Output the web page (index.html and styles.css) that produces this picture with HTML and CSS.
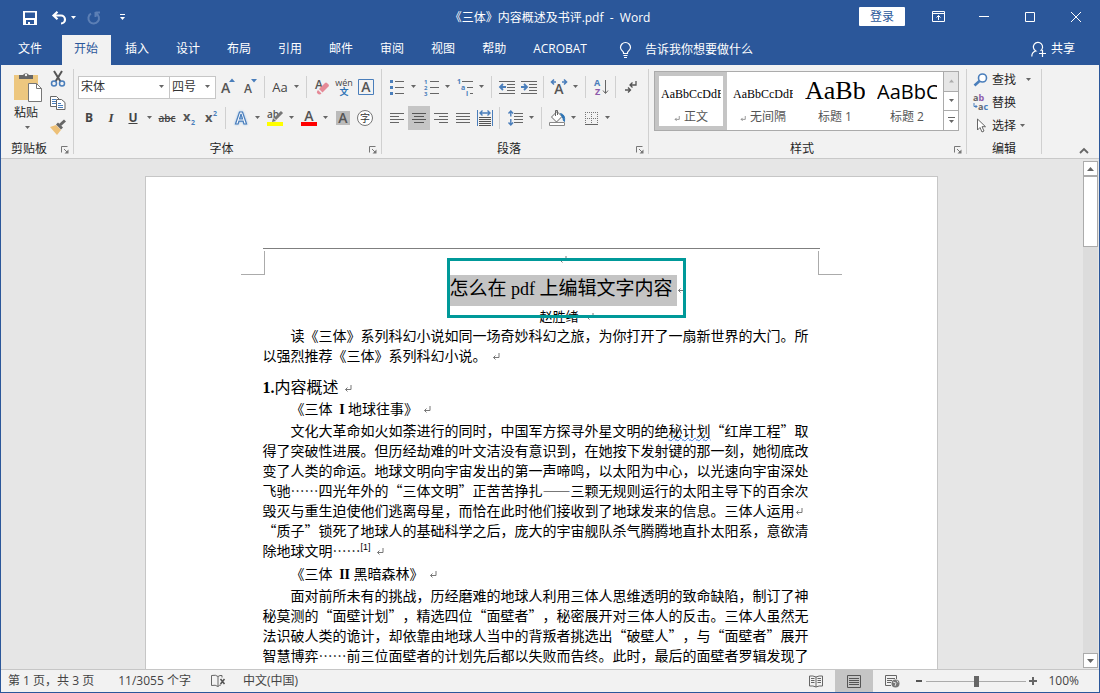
FILE: index.html
```html
<!DOCTYPE html>
<html lang="zh-CN">
<head>
<meta charset="utf-8">
<title>《三体》内容概述及书评.pdf - Word</title>
<link rel="stylesheet" href="styles.css">
</head>
<body>
<svg class="defs" aria-hidden="true">
  <symbol id="caret" viewBox="0 0 7 4"><path d="M1 0h5L3.500 3z" fill="#666"/></symbol>
  <symbol id="ret" viewBox="0 0 8 8"><path d="M7 0v4.500H1.500M3.500 2.500l-2 2 2 2" fill="none" stroke="#777"/></symbol>
  <symbol id="launch" viewBox="0 0 8 8"><path d="M.5 6.500v-6h6M3 3l3 3" fill="none" stroke="#777"/><path d="M7.500 3.500v4h-4z" fill="#777"/></symbol>
</svg>
<div class="window">
  <header class="titlebar">
    <div class="quick">
      <button class="q-save" aria-label="保存"><svg width="14" height="14" viewBox="0 0 14 14"><path d="M0 0h14v14H0zM2 1.500v5.500h10V1.500zM3 9v4h2v-2h2v2h4V9z" fill="#fff" fill-rule="evenodd"/></svg></button>
      <button class="q-undo" aria-label="撤消"><svg width="15" height="14" viewBox="0 0 15 14"><path d="M1.500 4.500H9a4 4 0 0 1 0 8M5.500.7 1.500 4.500l4 3.800" fill="none" stroke="#fff" stroke-width="2.200"/></svg></button>
      <button class="q-caret" aria-label="撤消列表"><svg width="7" height="4" viewBox="0 0 7 4"><path d="M1 0h5L3.500 3z" fill="#fff"/></svg></button>
      <button class="q-redo" aria-label="恢复"><svg width="14" height="14" viewBox="0 0 14 14"><path d="M8.500 1.500H13M8.500 1v5M9 2.500a5.300 5.300 0 1 1-5 .2" fill="none" stroke="#5c7fb5" stroke-width="2"/></svg></button>
      <button class="q-more" aria-label="自定义快速访问工具栏"><svg width="7" height="7" viewBox="0 0 7 7"><path d="M1 .5h5" stroke="#fff"/><path d="M1 3h5L3.500 6z" fill="#fff"/></svg></button>
    </div>
    <h1 class="title">《三体》内容概述及书评.pdf  -  Word</h1>
    <div class="controls">
      <button class="login">登录</button>
      <button class="win" aria-label="功能区显示选项"><svg width="13" height="11" viewBox="0 0 13 11"><path d="M.5.5h12v10H.5zM.5 2.500h12M6.500 9V4.500M4.500 6.500l2-2 2 2" fill="none" stroke="#fff"/></svg></button>
      <button class="win" aria-label="最小化"><svg width="10" height="10" viewBox="0 0 10 10"><path d="M0 4.500h10" stroke="#fff"/></svg></button>
      <button class="win" aria-label="最大化"><svg width="10" height="10" viewBox="0 0 10 10"><path d="M.5.5h9v9h-9z" fill="none" stroke="#fff"/></svg></button>
      <button class="win" aria-label="关闭"><svg width="10" height="10" viewBox="0 0 10 10"><path d="m0 0 10 10m0-10-10 10" stroke="#fff"/></svg></button>
    </div>
  </header>

  <nav class="tabs">
    <button class="tab file">文件</button>
    <button class="tab active">开始</button>
    <button class="tab">插入</button>
    <button class="tab">设计</button>
    <button class="tab">布局</button>
    <button class="tab">引用</button>
    <button class="tab">邮件</button>
    <button class="tab">审阅</button>
    <button class="tab">视图</button>
    <button class="tab">帮助</button>
    <button class="tab">ACROBAT</button>
    <button class="tell"><svg width="13" height="17" viewBox="0 0 13 17"><path d="M4.500 11.500v-1C4 9 1.500 8 1.500 5.500a5 5 0 0 1 10 0C11.500 8 9 9 8.500 10.500v1zM4.500 13.500h4M5 15.500h3" fill="none" stroke="#fff" stroke-width="1.200"/></svg>告诉我你想要做什么</button>
    <button class="share"><svg width="15" height="17" viewBox="0 0 15 17"><path d="M.8 15.500c0-3.500 2-5 4-5.500A4.600 4.600 0 1 1 9.500 9.800M11.500 9v7M8 12.500h7" fill="none" stroke="#fff" stroke-width="1.200"/></svg>共享</button>
  </nav>

  <section class="ribbon">
    <div class="group clip">
      <div class="clip-body">
        <button class="paste">
          <svg width="28" height="30" viewBox="0 0 28 30"><path d="M0 3h24v25H0z" fill="#edc77f"/><path d="M5 7V3h4a3.500 3.500 0 0 1 6 0h4v4z" fill="#666"/><circle cx="12" cy="3" r="1.200" fill="#f2f2f2"/><path d="M14.500 11.500h8l5 5v13h-13z" fill="#fff" stroke="#777"/><path d="M22.500 11.500v5h5" fill="none" stroke="#777"/></svg>
          <span>粘贴</span>
          <svg class="caret"><use href="#caret"/></svg>
        </button>
        <div class="clip-tools">
          <button class="ib" aria-label="剪切"><svg width="16" height="16" viewBox="0 0 16 16"><path d="m4 0 6.500 10.500M12 0 5.500 10.500" stroke="#555" stroke-width="2"/><g fill="none" stroke="#4a7ebb" stroke-width="1.500"><circle cx="4" cy="12.500" r="2.500"/><circle cx="12" cy="12.500" r="2.500"/></g></svg></button>
          <button class="ib" aria-label="复制"><svg width="16" height="16" viewBox="0 0 16 16"><g fill="#fff" stroke="#666"><path d="M.5 1.500h6l3 3v7h-9z"/><path d="M6.500 4.500h5l3.500 3v7H6.500z"/></g><path d="M2 4.500h4M2 6.500h4M2 8.500h4M8 8.500h3M8 10.500h5M8 12.500h5" stroke="#4a7ebb"/></svg></button>
          <button class="ib" aria-label="格式刷"><svg width="16" height="16" viewBox="0 0 16 16"><path d="m0 8 6-2 5 5-4 5z" fill="#edc077"/><path d="m6 5.500 2-2 5 5-2 2z" fill="#666"/><path d="m10 6 5-4.500" stroke="#666" stroke-width="3"/></svg></button>
        </div>
      </div>
      <div class="label"><span>剪贴板</span><button aria-label="剪贴板选项"><svg width="8" height="8"><use href="#launch"/></svg></button></div>
    </div>

    <div class="group font">
      <div class="row">
        <div class="combo name"><select aria-label="字体"><option>宋体</option></select><svg class="caret"><use href="#caret"/></svg></div>
        <div class="combo size"><select aria-label="字号"><option>四号</option></select><svg class="caret"><use href="#caret"/></svg></div>
        <button class="ib" aria-label="增大字号"><svg width="16" height="18" viewBox="0 0 16 18"><text x="1" y="15" font-size="14" class="ig">A</text><path d="M9 4h6l-3-3.500z" fill="#4a7ebb"/></svg></button>
        <button class="ib" aria-label="减小字号"><svg width="16" height="18" viewBox="0 0 16 18"><text x="2" y="15" font-size="12" class="ig">A</text><path d="M9 1h6l-3 3.500z" fill="#4a7ebb"/></svg></button>
        <i class="sep"></i>
        <button class="ib ig aa">Aa</button><button class="cb" aria-label="更改大小写选项"><svg class="caret"><use href="#caret"/></svg></button>
        <i class="sep"></i>
        <button class="ib" aria-label="清除格式"><svg width="16" height="16" viewBox="0 0 16 16"><text x="1" y="10" font-size="12" class="ig">A</text><path d="m5 10 6-6q1-1 2 0l1.500 1.500q1 1 0 2l-6 6z" fill="#e58a97"/><path d="m4 11 3.500 3.500q-2 2-4 0-1.500-1.500.5-3.500z" fill="#e58a97"/></svg></button>
        <button class="ib" aria-label="拼音指南"><svg width="18" height="18" viewBox="0 0 18 18"><text x="9" y="8" font-size="9" text-anchor="middle" fill="#444">wén</text><text x="9" y="17" font-size="9" text-anchor="middle" fill="#2e75b6" font-weight="700">文</text></svg></button>
        <button class="ib" aria-label="字符边框"><svg width="16" height="16" viewBox="0 0 16 16"><path d="M.5.5h15v15H.5z" fill="none" stroke="#4a7ebb"/><text x="8" y="13" font-size="14" text-anchor="middle" class="ig">A</text></svg></button>
      </div>
      <div class="row">
        <button class="ib ig bold">B</button><button class="ib ig ital">I</button><button class="ib ig under">U</button><button class="cb" aria-label="下划线选项"><svg class="caret"><use href="#caret"/></svg></button>
        <button class="ib ig strike">abc</button>
        <button class="ib" aria-label="下标"><svg width="16" height="16" viewBox="0 0 16 16"><text x="2" y="11" font-size="13" class="ig heavy">x</text><text x="10" y="15" font-size="7" font-weight="700" fill="#4a7ebb">2</text></svg></button>
        <button class="ib" aria-label="上标"><svg width="16" height="16" viewBox="0 0 16 16"><text x="2" y="12" font-size="13" class="ig heavy">x</text><text x="10" y="6" font-size="7" font-weight="700" fill="#4a7ebb">2</text></svg></button>
        <i class="sep"></i>
        <button class="ib" aria-label="文本效果"><svg width="18" height="18" viewBox="0 0 18 18"><g font-size="16" font-weight="700" text-anchor="middle"><text x="9" y="15" fill="#fff" stroke="#4a7ebb" stroke-width="1.200" class="glow">A</text></g></svg></button><button class="cb" aria-label="文本效果选项"><svg class="caret"><use href="#caret"/></svg></button>
        <button class="ib" aria-label="突出显示"><svg width="16" height="18" viewBox="0 0 16 18"><text x="0" y="9" font-size="10" class="ig">ab</text><path d="m15 3-7 7" stroke="#777" stroke-width="3"/><path d="m6 9 3 3-4 1z" fill="#777"/><path d="M0 13h16v4H0z" fill="#ff0"/></svg></button><button class="cb" aria-label="突出显示颜色"><svg class="caret"><use href="#caret"/></svg></button>
        <button class="ib" aria-label="字体颜色"><svg width="16" height="18" viewBox="0 0 16 18"><text x="8" y="12" font-size="14" text-anchor="middle" class="ig">A</text><path d="M0 13h16v4H0z" fill="red"/></svg></button><button class="cb" aria-label="字体颜色选项"><svg class="caret"><use href="#caret"/></svg></button>
        <button class="ib" aria-label="字符底纹"><svg width="14" height="14" viewBox="0 0 14 14"><path d="M0 0h14v14H0z" fill="#bbb"/><text x="7" y="12" font-size="14" text-anchor="middle" class="ig">A</text></svg></button>
        <button class="ib" aria-label="带圈字符"><svg width="16" height="16" viewBox="0 0 16 16"><circle cx="8" cy="8" r="7.500" fill="#fff" stroke="#777"/><text x="8" y="12" font-size="10" text-anchor="middle" fill="#333">字</text></svg></button>
      </div>
      <div class="label"><span>字体</span><button aria-label="字体选项"><svg width="8" height="8"><use href="#launch"/></svg></button></div>
    </div>

    <div class="group para">
      <div class="row">
        <button class="ib" aria-label="项目符号"><svg width="14" height="16" viewBox="0 0 14 16"><path d="M0 1h3v3H0zM0 7h3v3H0zM0 13h3v3H0z" fill="#4a7ebb"/><path d="M5 2.500h9M5 8.500h9M5 14.500h9" stroke="#666"/></svg></button><button class="cb" aria-label="项目符号库"><svg class="caret"><use href="#caret"/></svg></button>
        <button class="ib" aria-label="编号"><svg width="15" height="18" viewBox="0 0 15 18"><g font-size="6" font-weight="700" fill="#4a7ebb"><text x="0" y="6">1</text><text x="0" y="12">2</text><text x="0" y="18">3</text></g><path d="M6 3.500h9M6 9.500h9M6 15.500h9" stroke="#666"/></svg></button><button class="cb" aria-label="编号库"><svg class="caret"><use href="#caret"/></svg></button>
        <button class="ib" aria-label="多级列表"><svg width="16" height="18" viewBox="0 0 16 18"><g font-size="7" font-weight="700" fill="#4a7ebb"><text x="0" y="6">1</text><text x="4" y="12">a</text><text x="9" y="18">i</text></g><path d="M5 3.500h11M10 9.500h6M13 15.500h3" stroke="#666"/></svg></button><button class="cb" aria-label="列表库"><svg class="caret"><use href="#caret"/></svg></button>
        <i class="sep"></i>
        <button class="ib" aria-label="减少缩进量"><svg width="16" height="14" viewBox="0 0 16 14"><path d="M0 1.500h16M8 4.500h8M8 7.500h8M8 10.500h8M0 13.500h16" stroke="#666"/><path d="M7 7H1M4 4 1 7l3 3" fill="none" stroke="#4a7ebb" stroke-width="1.800"/></svg></button>
        <button class="ib" aria-label="增加缩进量"><svg width="16" height="14" viewBox="0 0 16 14"><path d="M0 1.500h16M8 4.500h8M8 7.500h8M8 10.500h8M0 13.500h16" stroke="#666"/><path d="M0 7h6M3 4l3 3-3 3" fill="none" stroke="#4a7ebb" stroke-width="1.800"/></svg></button>
        <i class="sep"></i>
        <button class="ib" aria-label="中文版式"><svg width="18" height="16" viewBox="0 0 18 16"><text x="9" y="15" font-size="14" text-anchor="middle" class="ig">A</text><path d="M6 3H2M4 .5 1.500 3 4 5.500M12 3h4M14 .5 16.500 3 14 5.500" fill="none" stroke="#4a7ebb" stroke-width="1.600"/></svg></button><button class="cb" aria-label="中文版式选项"><svg class="caret"><use href="#caret"/></svg></button>
        <i class="sep"></i>
        <button class="ib" aria-label="排序"><svg width="15" height="18" viewBox="0 0 15 18"><g font-size="9" font-weight="700"><text x="0" y="8" fill="#4a7ebb">A</text><text x="1" y="17" fill="#8e5bab">Z</text></g><path d="M11.500 2v13M9 12.500l2.500 3 2.500-3" fill="none" stroke="#666"/></svg></button>
        <i class="sep"></i>
        <button class="ib" aria-label="显示编辑标记"><svg width="12" height="14" viewBox="0 0 12 14"><path d="M11 1v4H5M7.500 2.500 5 5l2.500 2.500M0 10h5.500M3 7.500 5.500 10 3 12.500" fill="none" stroke="#555" stroke-width="1.300"/></svg></button>
      </div>
      <div class="row">
        <button class="ib" aria-label="左对齐"><svg width="14" height="12" viewBox="0 0 14 12"><path d="M0 1.500h14M0 4.500h9M0 7.500h14M0 10.500h9" stroke="#666"/></svg></button>
        <button class="ib on" aria-label="居中"><svg width="14" height="12" viewBox="0 0 14 12"><path d="M0 1.500h14M2 4.500h10M0 7.500h14M2 10.500h10" stroke="#555"/></svg></button>
        <button class="ib" aria-label="右对齐"><svg width="14" height="12" viewBox="0 0 14 12"><path d="M0 1.500h14M5 4.500h9M0 7.500h14M5 10.500h9" stroke="#666"/></svg></button>
        <button class="ib" aria-label="两端对齐"><svg width="14" height="12" viewBox="0 0 14 12"><path d="M0 1.500h14M0 4.500h14M0 7.500h14M0 10.500h14" stroke="#666"/></svg></button>
        <button class="ib" aria-label="分散对齐"><svg width="16" height="16" viewBox="0 0 16 16"><path d="M.5 0v16M15.500 0v16" stroke="#4a7ebb"/><path d="M3 3h10M5.500.5 3 3l2.500 2.500M10.500.5 13 3l-2.500 2.500" fill="none" stroke="#4a7ebb" stroke-width="1.400"/><path d="M2 7.500h12M2 9.500h12M2 11.500h12M2 13.500h12M2 15.500h12" stroke="#555"/></svg></button>
        <i class="sep"></i>
        <button class="ib" aria-label="行距"><svg width="15" height="16" viewBox="0 0 15 16"><path d="M6 3.500h9M6 6.500h9M6 9.500h9M6 12.500h9" stroke="#666"/><path d="M2.800 1v5.500M.5 3.500 2.800 1l2.300 2.500M2.800 9v6M.5 12.500 2.800 15l2.300-2.500" fill="none" stroke="#4a7ebb" stroke-width="1.400"/></svg></button><button class="cb" aria-label="行距选项"><svg class="caret"><use href="#caret"/></svg></button>
        <i class="sep"></i>
        <button class="ib" aria-label="底纹"><svg width="17" height="16" viewBox="0 0 17 16"><path d="m8 1.500 5 5L7.500 12l-5-5z" fill="#fff" stroke="#666"/><path d="M6.500 6V.5h2V5" fill="none" stroke="#666"/><path d="M11.500 3.500q5 1 4 8-1.500-.5-1.500-3z" fill="#2e75b6" stroke="#2e75b6"/><path d="M.5 12.500h15v3H.5z" fill="#fff" stroke="#888"/></svg></button><button class="cb" aria-label="底纹颜色"><svg class="caret"><use href="#caret"/></svg></button>
        <button class="ib" aria-label="边框"><svg width="13" height="13" viewBox="0 0 13 13"><path d="M0 .5h13M0 6.500h13M.5 0v12M6.500 0v12M12.500 0v12" stroke="#777" stroke-dasharray="1 1"/><path d="M0 12.500h13" stroke="#666"/></svg></button><button class="cb" aria-label="边框选项"><svg class="caret"><use href="#caret"/></svg></button>
      </div>
      <div class="label"><span>段落</span><button aria-label="段落选项"><svg width="8" height="8"><use href="#launch"/></svg></button></div>
    </div>

    <div class="group styles">
      <div class="gallery">
        <button class="style sel"><span class="sample small">AaBbCcDdE</span><span class="sname"><svg class="rt"><use href="#ret"/></svg> 正文</span></button>
        <button class="style"><span class="sample small">AaBbCcDdE</span><span class="sname"><svg class="rt"><use href="#ret"/></svg> 无间隔</span></button>
        <button class="style"><span class="sample big">AaBb</span><span class="sname">标题 1</span></button>
        <button class="style"><span class="sample mid">AaBbC</span><span class="sname">标题 2</span></button>
        <div class="gscroll">
          <button class="off" aria-label="上一行"><svg width="7" height="4" viewBox="0 0 7 4"><path d="M1 3.500h5L3.500.5z" fill="#aaa"/></svg></button>
          <button aria-label="下一行"><svg class="caret"><use href="#caret"/></svg></button>
          <button aria-label="其他"><svg width="7" height="7" viewBox="0 0 7 7"><path d="M0 .5h7" stroke="#666"/><path d="M1 3h5L3.500 6z" fill="#666"/></svg></button>
        </div>
      </div>
      <div class="label"><span>样式</span><button aria-label="样式选项"><svg width="8" height="8"><use href="#launch"/></svg></button></div>
    </div>

    <div class="group edit">
      <div class="edit-body">
        <button><svg width="16" height="14" viewBox="0 0 16 14"><circle cx="9.500" cy="5" r="4" fill="#fff" stroke="#4a7ebb" stroke-width="1.600"/><path d="m6.500 8-5 4.500" stroke="#4a7ebb" stroke-width="2.600"/></svg><span>查找</span><svg class="caret far"><use href="#caret"/></svg></button>
        <button><svg width="16" height="17" viewBox="0 0 16 17"><g font-size="9" font-weight="700"><text x="0" y="7" fill="#666">a<tspan fill="#8e5bab">b</tspan></text><text x="5" y="16" fill="#666">a<tspan fill="#4a7ebb">c</tspan></text></g><path d="M1 9v3.500h3M2.500 11 4 12.500 2.500 14" fill="none" stroke="#4a7ebb"/></svg><span>替换</span></button>
        <button><svg width="16" height="15" viewBox="0 0 16 15"><path d="M4.500 1v11l2.500-2.500 2 4.500 2-1-2-4.300h3.500z" fill="#fff" stroke="#666"/></svg><span>选择</span><svg class="caret"><use href="#caret"/></svg></button>
      </div>
      <div class="label"><span>编辑</span></div>
    </div>
    <button class="collapse" aria-label="折叠功能区"><svg width="10" height="7" viewBox="0 0 10 7"><path d="m1 6 4-4 4 4" fill="none" stroke="#666" stroke-width="1.800"/></svg></button>
  </section>

  <main class="workspace">
    <div class="canvas">
      <article class="page">
        <div class="rule"></div>
        <div class="sheet">
          <i class="crop left"></i>
          <div class="content">
            <div class="heading">
              <p class="blank"><svg class="ret"><use href="#ret"/></svg></p>
              <h2 class="doc-title"><mark>怎么在<span class="lat"> pdf </span>上编辑文字内容</mark><svg class="ret"><use href="#ret"/></svg></h2>
              <p class="author">赵胜绪 <svg class="ret"><use href="#ret"/></svg></p>
              <i class="frame"></i>
            </div>
            <p class="text">读《三体》系列科幻小说如同一场奇妙科幻之旅，为你打开了一扇新世界的大门。所<br>以强烈推荐《三体》系列科幻小说。<svg class="ret"><use href="#ret"/></svg></p>
            <h3 class="h1"><b>1.</b>内容概述<svg class="ret"><use href="#ret"/></svg></h3>
            <h4 class="h2">《三体 <b> I </b>地球往事》<svg class="ret"><use href="#ret"/></svg></h4>
            <p class="text">文化大革命如火如荼进行的同时，中国军方探寻外星文明的绝<span class="wavy">秘计划</span>“红岸工程”取<br>得了突破性进展。但历经劫难的叶文洁没有意识到，在她按下发射键的那一刻，她彻底改<br>变了人类的命运。地球文明向宇宙发出的第一声啼鸣，以太阳为中心，以光速向宇宙深处<br>飞驰……四光年外的“三体文明”正苦苦挣扎——三颗无规则运行的太阳主导下的百余次<br>毁灭与重生迫使他们逃离母星，而恰在此时他们接收到了地球发来的信息。三体人运用<svg class="ret tight"><use href="#ret"/></svg><br>“质子”锁死了地球人的基础科学之后，庞大的宇宙舰队杀气腾腾地直扑太阳系，意欲清<br>除地球文明……<sup>[1]</sup><svg class="ret"><use href="#ret"/></svg></p>
            <h4 class="h2">《三体 <b> II </b>黑暗森林》<svg class="ret"><use href="#ret"/></svg></h4>
            <p class="text">面对前所未有的挑战，历经磨难的地球人利用三体人思维透明的致命缺陷，制订了神<br>秘莫测的“面壁计划”，精选四位“面壁者”，秘密展开对三体人的反击。三体人虽然无<br>法识破人类的诡计，却依靠由地球人当中的背叛者挑选出“破壁人”，与“面壁者”展开<br>智慧博弈……前三位面壁者的计划先后都以失败而告终。此时，最后的面壁者罗辑发现了</p>
          </div>
          <i class="crop right"></i>
        </div>
      </article>
    </div>
    <div class="scroll">
      <button aria-label="向上滚动"><svg width="7" height="4" viewBox="0 0 7 4"><path d="M0 4h7L3.500 0z" fill="#666"/></svg></button>
      <div class="track"><div class="thumb"></div></div>
      <button aria-label="向下滚动"><svg width="7" height="4" viewBox="0 0 7 4"><path d="M0 0h7L3.500 4z" fill="#666"/></svg></button>
    </div>
  </main>

  <footer class="status">
    <span>第 1 页，共 3 页</span>
    <span>11/3055 个字</span>
    <button aria-label="校对"><svg width="15" height="14" viewBox="0 0 15 14"><path d="M7 2.500Q5 .5.500 1.500v10q4-1 6.500 1 2-2 3-1.500M7 2.500v10M7 2.500q2-1.500 4-1M11 1.500v2" fill="none" stroke="#666"/><path d="m9.500 5 4 5m0-5-4 5" stroke="#555" stroke-width="1.600"/></svg></button>
    <span>中文(中国)</span>
    <div class="views">
      <button class="view" aria-label="阅读视图"><svg width="14" height="13" viewBox="0 0 14 13"><path d="M7 2Q4 .5.500 1v10Q4 10.500 7 12q3-1.500 6.500-1V1Q10 .5 7 2v10M2 3.500h3.500M2 5.500h3.500M2 7.500h3.500M8.500 3.500H12M8.500 5.500H12M8.500 7.500H12" fill="none" stroke="#666"/></svg></button>
      <button class="view on" aria-label="页面视图"><svg width="14" height="13" viewBox="0 0 14 13"><path d="M.5.500h13v12H.5zM2 3.500h10M2 5.500h10M2 7.500h10M2 9.500h10" fill="none" stroke="#555"/></svg></button>
      <button class="view" aria-label="Web 版式视图"><svg width="15" height="13" viewBox="0 0 15 13"><path d="M11.500 4V.5H.5v10H6M2 3.500h8M2 5.500h5M2 7.500h4" fill="none" stroke="#666"/><circle cx="10.500" cy="8.500" r="4" fill="#777"/><path d="m8 7 3 1-1 3M12 5.500l1 2" fill="none" stroke="#ddd"/></svg></button>
    </div>
    <button class="zb" aria-label="缩小"><svg width="8" height="8" viewBox="0 0 8 8"><path d="M1 4h6" stroke="#555" stroke-width="2"/></svg></button>
    <input class="zoom" type="range" min="0" max="200" value="100" aria-label="显示比例">
    <button class="zb" aria-label="放大"><svg width="8" height="8" viewBox="0 0 8 8"><path d="M0 4h8M4 0v8" stroke="#666" stroke-width="2"/></svg></button>
    <span class="pct">100%</span>
  </footer>
</div>
</body>
</html>
```
FILE: styles.css
```css
* { box-sizing: border-box; }
body {
  margin: 0;
  font: 12px/16px "Open Sans", "Noto Sans CJK SC", sans-serif;
  color: #262626;
  text-spacing-trim: space-all;
}
button {
  margin: 0;
  padding: 0;
  border: 0;
  background: none;
  font: inherit;
  color: inherit;
}
h1, h2, h3, h4, p { margin: 0; font-weight: 400; }
svg { display: block; flex: none; overflow: visible; }
.defs { position: absolute; width: 0; height: 0; }
.caret { width: 7px; height: 4px; }

.window {
  display: flex;
  flex-direction: column;
  height: 100vh;
  border: 1px solid #2b579a;
  border-top: 0;
  background: #f2f2f2;
}

/* Title bar */
.titlebar {
  display: grid;
  grid-template-columns: 1fr auto 1fr;
  align-items: center;
  height: 35px;
  flex: none;
  background: #2b579a;
  color: #fff;
}
.quick { display: flex; align-items: center; padding-left: 22px; }
.q-undo { margin-left: 15px; }
.q-caret { margin-left: 3px; }
.q-redo { margin-left: 10px; }
.q-more { margin-left: 18px; }
.title { font-size: 12px; line-height: 16px; white-space: pre; }
.controls { display: flex; justify-content: flex-end; align-items: center; padding-bottom: 2px; }
.login {
  width: 46px;
  height: 19px;
  margin-right: 10px;
  border-radius: 1px;
  background: #fff;
  color: #2b579a;
}
.win { display: grid; place-items: center; width: 46px; height: 32px; }

/* Tabs */
.tabs {
  display: flex;
  gap: 2px;
  height: 30px;
  flex: none;
  background: #2b579a;
  color: #fff;
}
.tab { padding: 0 13px 2px 12px; }
.tab.file { width: 59px; }
.tab.active { background: #f2f2f2; color: #2b579a; }
.tell, .share { display: flex; align-items: center; }
.tell { gap: 13px; margin-left: 17px; }
.share { gap: 5px; margin: 0 24px 2px auto; }

/* Ribbon */
.ribbon {
  display: flex;
  height: 94px;
  flex: none;
  padding-top: 4px;
  border-bottom: 1px solid #c9c9c9;
}
.group {
  display: flex;
  flex-direction: column;
  height: 85px;
  border-right: 1px solid #d0d0d0;
}
.label {
  display: flex;
  align-items: center;
  height: 18px;
  margin-top: auto;
  margin-bottom: -4px;
}
.label span { flex: 1; text-align: center; }
.label button { width: 16px; padding: 1px 0 0 4px; }
.row { display: flex; align-items: center; height: 24px; margin-top: 6px; }
.row + .row { margin-top: 7px; }
.ib { display: grid; place-items: center; flex: none; width: 22px; height: 24px; }
.ib.on { background: #c5c5c5; }
.cb { width: 12px; height: 24px; padding-left: 2px; flex: none; }
.sep { width: 1px; height: 22px; margin: 0 4px 0 3px; background: #d0d0d0; }
.ig { fill: #555; color: #444; }
text.ig { font-weight: 600; }
text.heavy { font-weight: 700; }
.glow { filter: drop-shadow(0 0 1px #9cc2e8); }

.clip { width: 73px; }
.clip-body { display: flex; padding-left: 12px; }
.paste { display: flex; flex-direction: column; align-items: center; width: 29px; padding-top: 3px; }
.paste svg:first-child { margin-left: 1px; }
.paste span { margin: 3px 3px 5px 0; }
.clip-tools { display: flex; flex-direction: column; margin: -2px 0 0 5px; }

.font { width: 308px; padding-left: 4px; }
.combo {
  display: flex;
  align-items: center;
  height: 23px;
  padding-right: 4px;
  border: 1px solid #c6c6c6;
  background: #fff;
}
.combo select {
  flex: 1;
  min-width: 0;
  padding: 0 0 0 2px;
  border: 0;
  background: none;
  font: inherit;
  color: #333;
  appearance: none;
}
.combo.name { width: 92px; }
.combo.size { width: 47px; margin: 0 1px 0 -1px; }
.aa { font-size: 13px; }
.bold { font-weight: 700; }
.ital { font: italic 700 13px "Liberation Serif", serif; }
.under { font-weight: 700; text-decoration: underline; }
.strike { font-size: 10px; font-weight: 600; text-decoration: line-through; }
.font .label { padding-right: 4px; }
.font .label button { margin-right: -4px; }

.para { width: 267px; padding-left: 4px; }
.para .label { padding-right: 2px; }
.para .label button { margin-right: -2px; }
.styles { width: 318px; padding-left: 5px; }
.styles .label { padding-right: 6px; }
.styles .label button { margin-right: -6px; }
.gallery {
  display: flex;
  width: 305px;
  height: 60px;
  margin-top: 2px;
  border: 1px solid #ababab;
  background: #fff;
}
.style {
  display: flex;
  flex-direction: column;
  justify-content: flex-end;
  width: 72px;
  padding: 0 6px 5px;
  color: #555;
}
.style.sel { padding: 0 2px 1px; border: 4px solid #c5c5c5; }
.sample {
  width: 60px;
  overflow: hidden;
  color: #000;
  text-align: left;
  white-space: nowrap;
  font-family: "Liberation Serif", serif;
}
.sample.small { font-size: 12px; line-height: 16px; margin-bottom: 7px; }
.sample.big { font-size: 26px; line-height: 32px; margin-bottom: 2px; }
.sample.mid { font: 20px/26px "Open Sans", sans-serif; margin-bottom: 4px; }
.sname { display: flex; justify-content: center; align-items: center; gap: 4px; white-space: nowrap; }
.rt { width: 6px; height: 6px; margin-top: 4px; }
.gscroll { display: flex; flex-direction: column; flex: 1; border-left: 1px solid #ababab; }
.gscroll button { display: grid; place-items: center; flex: 1; }
.gscroll button + button { border-top: 1px solid #ababab; }
.gscroll .off { background: #e6e6e6; }

.edit { width: 75px; }
.edit-body { padding: 0 0 0 6px; margin-top: -1px; }
.edit-body button { display: flex; align-items: center; height: 23px; gap: 3px; }
.edit-body .far { margin-left: 6px; }
.collapse { align-self: flex-end; margin: 0 10px 4px auto; }

/* Document area */
.workspace { display: flex; flex: 1; min-height: 0; background: #e6e6e6; }
.canvas { flex: 1; overflow: hidden; padding: 17px 2px 0 0; }
.page {
  width: 793px;
  min-height: 700px;
  margin: 0 auto;
  padding-top: 71px;
  border: 1px solid #c6c6c6;
  background: #fff;
}
.rule { height: 1px; margin: 0 117px 2px; background: #7f7f7f; }
.sheet { display: grid; grid-template-columns: 24px 1fr 24px; padding: 0 95px; }
.crop { height: 24px; border-bottom: 1px solid #ababab; }
.crop.left { border-right: 1px solid #ababab; }
.crop.right { border-left: 1px solid #ababab; }
.content {
  margin-left: -2px;
  font: 14px/20px "Noto Sans CJK SC", sans-serif;
  color: #000;
  white-space: nowrap;
}
.content b, .lat { font-family: "Liberation Serif", serif; line-height: 1; white-space: pre; }
.ret { display: inline-block; width: 8px; height: 8px; margin-left: 5px; }
.ret.tight { margin-left: 0; }
.heading {
  position: relative;
  padding-left: 54px;
  text-align: center;
}
.blank { height: 16px; line-height: 14px; padding-right: 8px; }
.blank .ret { margin: 0; }
.doc-title { display: flex; justify-content: center; height: 40px; padding-top: 8px; font-size: 19px; line-height: 24px; }
.doc-title mark { height: 31px; padding-right: 4px; background: #c4c4c4; color: #000; }
.doc-title .ret { margin: 11px 0 0; }
.lat { font-size: 18px; }
.author { height: 18px; font-size: 13px; line-height: 18px; }
.frame {
  position: absolute;
  left: 184px;
  top: 7px;
  width: 239px;
  height: 60px;
  border: 3px solid #009999;
}
.text { text-indent: 28px; }
.text sup { font: 9px/0 "Liberation Sans", sans-serif; }
.wavy { text-decoration: underline wavy #2f6fe0 1px; text-underline-offset: 1px; }
.h1 { margin-top: 9px; font-size: 16px; line-height: 24px; }
.h2 { margin: 0 0 2px; padding-left: 28px; font-size: 14px; line-height: 20px; }
.text + .h2 { margin-top: 3px; }

/* Scroll bar */
.scroll { display: flex; flex-direction: column; width: 16px; padding: 2px 1px 1px 0; }
.scroll button {
  display: grid;
  place-items: center;
  height: 15px;
  flex: none;
  border: 1px solid #ababab;
  background: #fff;
}
.track { flex: 1; background: #dcdcdc; }
.thumb { height: 71px; border: 1px solid #ababab; background: #fff; }

/* Status bar */
.status {
  display: flex;
  align-items: center;
  height: 23px;
  flex: none;
  padding: 0 20px 0 7px;
  border-top: 1px solid #c6c6c6;
  color: #444;
  white-space: nowrap;
}
.status > span + span { margin-left: 24px; }
.status > span + button { margin-left: 20px; }
.status > button + span { margin-left: 17px; }
.views { display: flex; align-self: stretch; margin-left: auto; }
.view { display: grid; place-items: center; width: 38px; }
.view.on { background: #c5c5c5; }
.views + .zb { margin-left: 4px; }
.zoom { width: 100px; height: 12px; margin: 0 3px; appearance: none; background: linear-gradient(#ababab, #ababab) center / 100% 1px no-repeat; }
.zoom::-webkit-slider-thumb { appearance: none; width: 5px; height: 11px; background: #666; }
.status .pct { margin-left: 11px; }
```
